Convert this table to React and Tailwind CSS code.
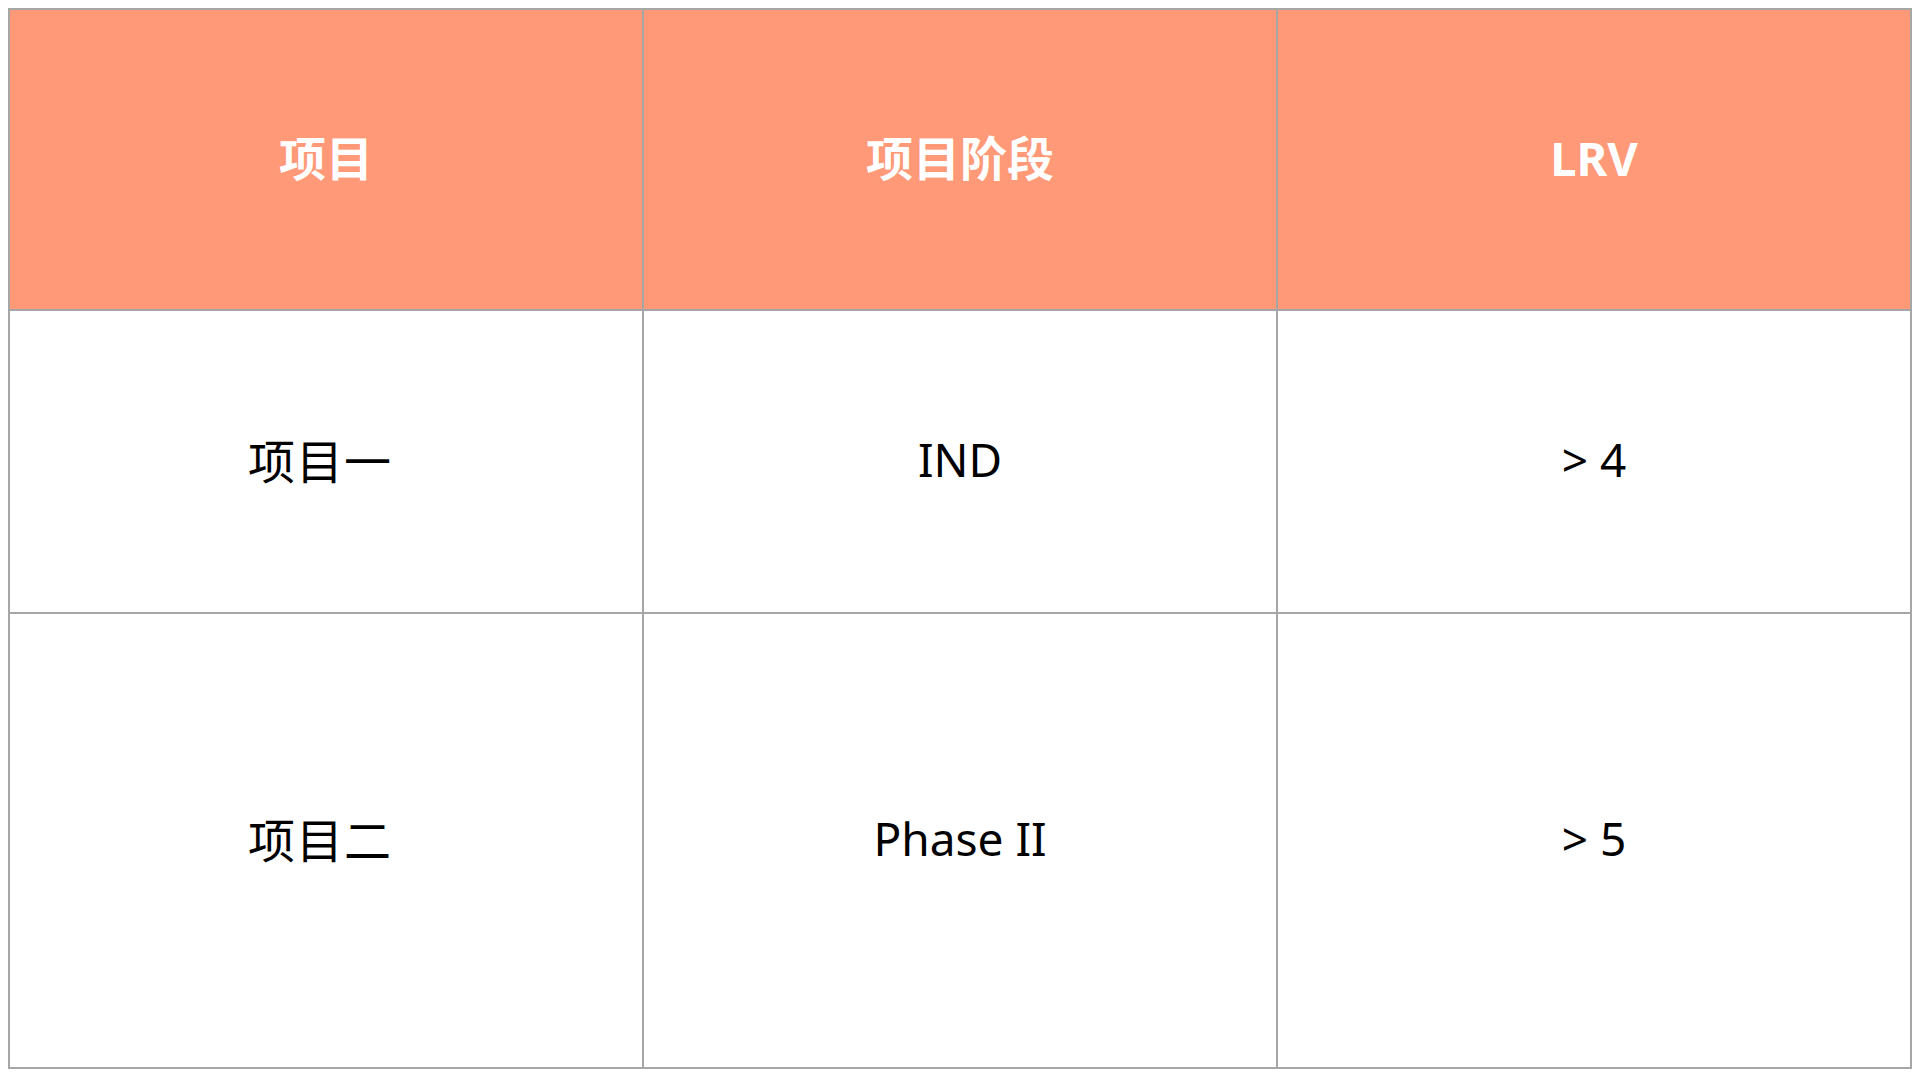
// App.jsx
const rows = [
  ["项目一", "IND", "> 4"],
  ["项目二", "Phase II", "> 5"],
];

const font = {
  fontFamily: '"Noto Sans", "Noto Sans CJK SC", sans-serif',
};

export default function App() {
  return (
    <div className="min-h-screen bg-white p-2" style={font}>
      <div className="grid grid-cols-3 grid-rows-[301px_303px_455px] border-l-2 border-t-2 border-[#a6a6a6]">
        {["项目", "项目阶段", "LRV"].map((h) => (
          <div
            key={h}
            className="flex items-center justify-center border-b-2 border-r-2 border-[#a6a6a6] bg-[#ff9977] pb-0.5 text-[47px] font-bold text-white"
          >
            {h}
          </div>
        ))}
        {rows.map((r) =>
          r.map((c, i) => (
            <div
              key={r[0] + i}
              className={
                i === 0
                  ? "flex items-center justify-center border-b-2 border-r-2 border-[#a6a6a6] pr-3 text-[47px] tracking-[1px] text-black"
                  : "flex items-center justify-center border-b-2 border-r-2 border-[#a6a6a6] pb-1 text-[46px] text-black"
              }
            >
              {c}
            </div>
          ))
        )}
      </div>
    </div>
  );
}
